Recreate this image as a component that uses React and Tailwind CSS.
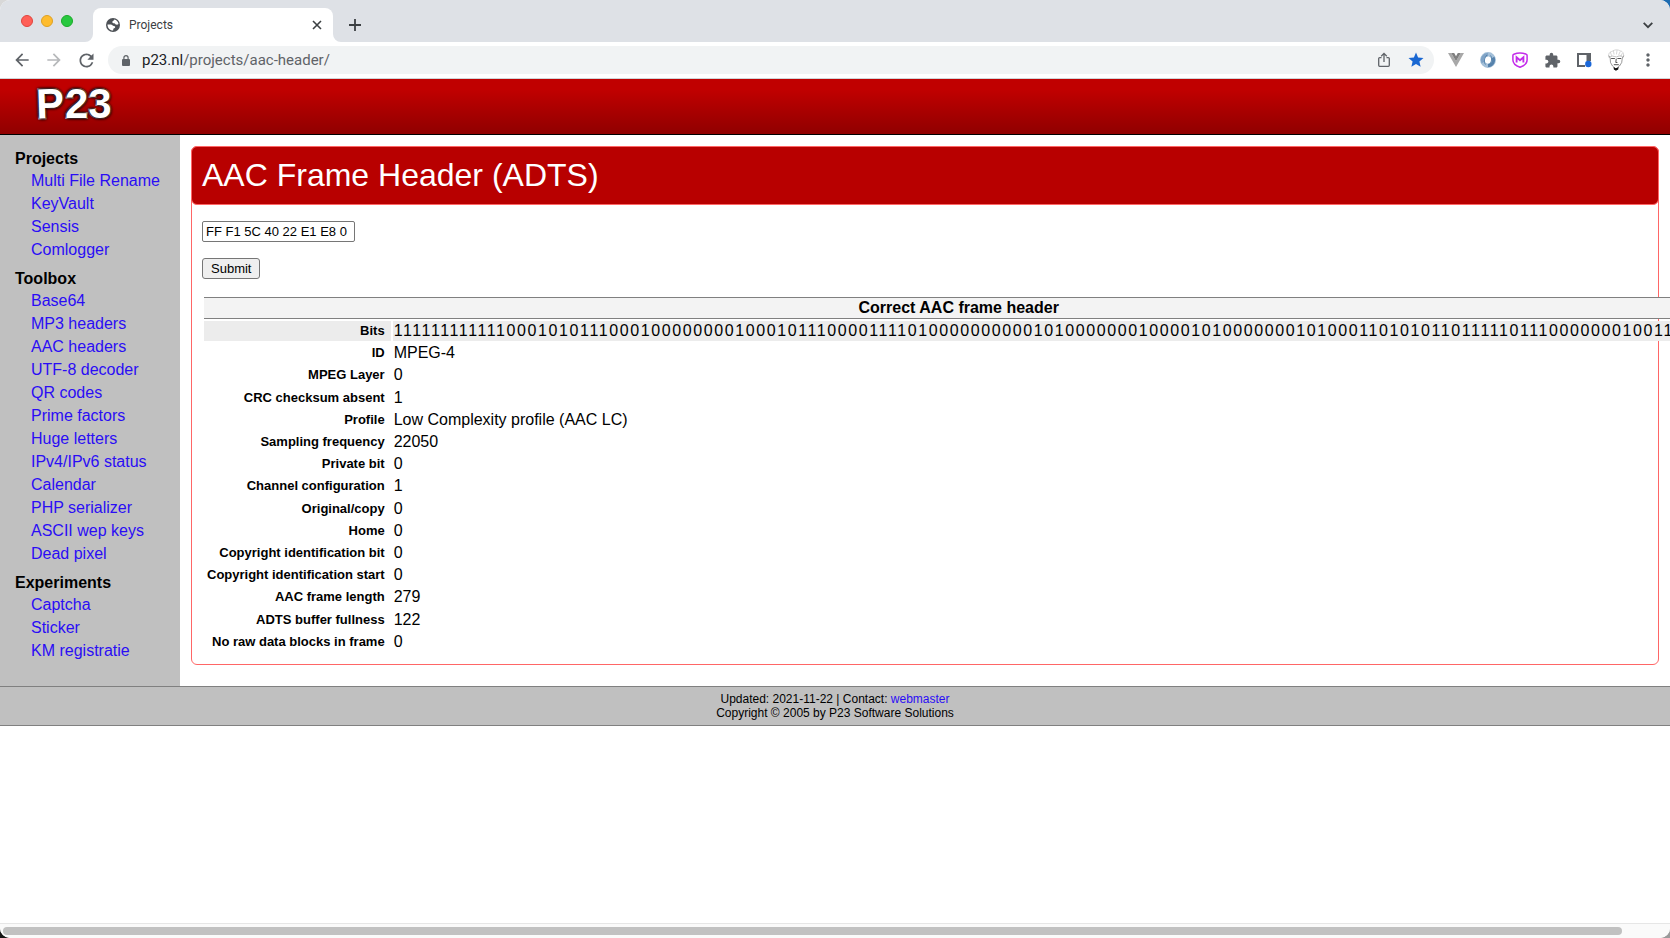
import React from "react";
import { MdArrowBack, MdArrowForward, MdRefresh, MdStar, MdExtension, MdMoreVert } from "react-icons/md";

const menu = [
  { title: "Projects", items: ["Multi File Rename", "KeyVault", "Sensis", "Comlogger"] },
  {
    title: "Toolbox",
    items: [
      "Base64",
      "MP3 headers",
      "AAC headers",
      "UTF-8 decoder",
      "QR codes",
      "Prime factors",
      "Huge letters",
      "IPv4/IPv6 status",
      "Calendar",
      "PHP serializer",
      "ASCII wep keys",
      "Dead pixel",
    ],
  },
  { title: "Experiments", items: ["Captcha", "Sticker", "KM registratie"] },
];

const bits = [
  "11111111", "11110001", "01011100", "01000000", "00100010", "11100001", "11101000", "00000001",
  "01000000", "01000010", "10000000", "10100011", "01010110", "11111011", "10000000", "10011000",
].join("");

const fields = [
  ["ID", "MPEG-4"],
  ["MPEG Layer", "0"],
  ["CRC checksum absent", "1"],
  ["Profile", "Low Complexity profile (AAC LC)"],
  ["Sampling frequency", "22050"],
  ["Private bit", "0"],
  ["Channel configuration", "1"],
  ["Original/copy", "0"],
  ["Home", "0"],
  ["Copyright identification bit", "0"],
  ["Copyright identification start", "0"],
  ["AAC frame length", "279"],
  ["ADTS buffer fullness", "122"],
  ["No raw data blocks in frame", "0"],
];

function Slot({ label, children, className = "" }) {
  return (
    <button type="button" aria-label={label} className={`flex h-7 w-8 shrink-0 items-center justify-center text-[#5f6368] ${className}`}>
      {children}
    </button>
  );
}

function TabStrip() {
  return (
    <div className="flex h-[42px] shrink-0 items-end bg-[#dee1e6] pr-[6px]">
      <div className="flex h-[42px] w-[93px] items-center gap-2 pl-[21px]">
        <button type="button" aria-label="Close window" className="size-3 rounded-full border border-[#e0443e] bg-[#ff5f57]" />
        <button type="button" aria-label="Minimize window" className="size-3 rounded-full border border-[#dea123] bg-[#febc2e]" />
        <button type="button" aria-label="Zoom window" className="size-3 rounded-full border border-[#1aab29] bg-[#28c840]" />
      </div>
      <div className="relative flex h-[34px] w-[240px] items-center rounded-t-lg bg-white pl-[13px] pr-[8px]">
        <svg className="absolute -left-2 bottom-0 size-2 text-white" viewBox="0 0 8 8" aria-hidden="true">
          <path d="M8 0v8H0a8 8 0 0 0 8-8z" fill="currentColor" />
        </svg>
        <svg className="absolute -right-2 bottom-0 size-2 text-white" viewBox="0 0 8 8" aria-hidden="true">
          <path d="M0 0v8h8a8 8 0 0 1-8-8z" fill="currentColor" />
        </svg>
        <svg className="size-[14px]" viewBox="0 0 14 14" aria-hidden="true">
          <circle cx="7" cy="7" r="7" fill="#4d5156" />
          <path d="M1.5 6.400h3.200c1.600 0 1.800 1.500 3.200 1.500 1.200 0 1.500.8 1.200 1.500-.4.900-1.500.7-1.800 1.500-.2.600.2 1.200-.3 1.700C3.800 12.300 1.500 9.800 1.500 6.400z" fill="#fff" />
          <path d="M8.300 1.600c2.200.5 3.800 2.200 4.200 4.400-.7.700-1.600.9-2.600.6-.9-.3-.6-1.200-1.700-1.300-1.300-.1-2-.6-1.800-1.600.2-.9 1.700-1 1.900-2.100z" fill="#fff" />
        </svg>
        <span className="ml-[9px] flex-1 font-[Roboto,sans-serif] text-[12px] leading-4 text-[#3c4043]">Projects</span>
        <button type="button" aria-label="Close tab" className="flex size-4 items-center justify-center text-[#3c4043]">
          <svg className="size-[10px]" viewBox="0 0 10 10" fill="none" stroke="currentColor" strokeWidth="1.600" aria-hidden="true">
            <path d="M1 1l8 8M9 1L1 9" />
          </svg>
        </button>
      </div>
      <button type="button" aria-label="New tab" className="ml-2 flex h-[34px] w-7 items-center justify-center text-[#3c4043]">
        <svg className="size-3" viewBox="0 0 12 12" fill="none" stroke="currentColor" strokeWidth="1.800" aria-hidden="true">
          <path d="M6 0v12M0 6h12" />
        </svg>
      </button>
      <button type="button" aria-label="Search tabs" className="ml-auto flex h-[34px] w-8 items-center justify-center text-[#3c4043]">
        <svg className="size-[10px]" viewBox="0 0 10 10" fill="none" stroke="currentColor" strokeWidth="1.800" aria-hidden="true">
          <path d="M.7 2.800L5 7.200l4.300-4.400" />
        </svg>
      </button>
    </div>
  );
}

function Toolbar() {
  return (
    <div className="flex h-[37px] shrink-0 items-center border-b border-[#d0d3d7] bg-white px-[6px]">
      <Slot label="Back"><MdArrowBack className="size-5" /></Slot>
      <Slot label="Forward" className="opacity-45"><MdArrowForward className="size-5" /></Slot>
      <Slot label="Reload"><MdRefresh className="size-[21px]" /></Slot>
      <div className="mx-[6px] flex h-7 min-w-0 flex-1 items-center rounded-full bg-[#f1f3f4] pl-[14px] pr-[2px]">
        <svg className="h-[11px] w-2 shrink-0" viewBox="0 0 8 11" aria-hidden="true">
          <rect y="4" width="8" height="7" rx="1" fill="#5f6368" />
          <path d="M1.900 5V2.700a2.100 2.100 0 0 1 4.200 0V5" fill="none" stroke="#5f6368" strokeWidth="1.200" />
        </svg>
        <a href="#address" className="ml-3 min-w-0 flex-1 font-[Roboto,sans-serif] text-[15px] leading-5 text-[#5f6368]">
          <span className="text-[#202124]">p23.nl</span>/projects/aac-header/
        </a>
        <Slot label="Share">
          <svg className="h-4 w-3" viewBox="0 0 12 16" fill="none" stroke="currentColor" strokeWidth="1.300" aria-hidden="true">
            <path d="M3.500 5.600H1.700a1 1 0 0 0-1 1v6.700a1 1 0 0 0 1 1h8.600a1 1 0 0 0 1-1V6.600a1 1 0 0 0-1-1H8.500M6 10V1.500M3.200 4.200L6 1.400l2.800 2.800" />
          </svg>
        </Slot>
        <Slot label="Bookmark"><MdStar className="size-[18px] text-[#1967d2]" /></Slot>
      </div>
      <Slot label="Vue devtools">
        <svg className="h-[14px] w-4" viewBox="0 0 16 14" aria-hidden="true">
          <path d="M0 0h3.200L8 8.300 12.800 0H16L8 14z" fill="#a8a8a8" />
          <path d="M3.200 0h3L8 3.200 9.800 0h3L8 8.300z" fill="#7f7f7f" />
        </svg>
      </Slot>
      <Slot label="JSON viewer">
        <svg className="size-4" viewBox="0 0 16 16" fill="none" aria-hidden="true">
          <circle cx="8" cy="8" r="5.600" stroke="#a3bfd8" strokeWidth="4.600" />
          <path d="M8 13.600A5.600 5.600 0 0 0 13 5.500" stroke="#5682ac" strokeWidth="3" />
          <path d="M8 2.400A5.600 5.600 0 0 0 3 10.500" stroke="#7fa3c6" strokeWidth="3" />
          <path d="M10.500 3.500c2 2.500 1.200 6.800-1.500 9.500M5.500 12.500c-2-2.500-1.200-6.800 1.500-9.500" stroke="#4c7aa6" strokeWidth=".9" />
          <ellipse cx="8" cy="8" rx="2.200" ry="3.600" transform="rotate(12 8 8)" fill="#fff" />
        </svg>
      </Slot>
      <Slot label="Shield">
        <svg className="size-4" viewBox="0 0 16 16" fill="none" stroke="#c32bea" aria-hidden="true">
          <path d="M1.800 2.200Q8-.2 14.200 2.200q.9.300.9 1.300V8c0 3.600-3.300 5.900-7.100 7.300C4.200 13.900.9 11.600.9 8V3.500q0-1 .9-1.300z" strokeWidth="1.500" />
          <path d="M4.600 10.400V5.300L8 8.300l3.400-3v5.100" strokeWidth="1.900" />
        </svg>
      </Slot>
      <Slot label="Extensions"><MdExtension className="size-[17px]" /></Slot>
      <Slot label="Side panel">
        <svg className="size-4" viewBox="0 0 16 16" aria-hidden="true">
          <path d="M1 1h14v8h-4.500V3H3v10h6v2H1z" fill="#5f6368" />
          <circle cx="12.300" cy="12" r="3.200" fill="#1a67d8" />
        </svg>
      </Slot>
      <Slot label="Profile">
        <svg className="h-[22px] w-[18px]" viewBox="0 0 18 22" fill="none" stroke="#555" strokeWidth=".6" strokeLinecap="round" aria-hidden="true">
          <path d="M2 8.500C.8 5 2.500 2.800 5 2.500 7.500.3 11.500.5 13.500 2c2.500.3 3.800 3 2.800 6.300M3.500 3.500l1 3M6.500 2.200l.5 3M10 1.500L9.500 5M13 2.800l-1.200 3M15.200 4.500L14 7" stroke="#bbb" />
          <path d="M2 7l1.200 2 .3 4.500L5.500 17l3 2.500M16.500 7l-1.200 2-.6 4.500L12.500 17l-3 3" />
          <path d="M3.500 7.500q2-1 4 0t3.500-.2q2-1 4 0" stroke="#999" />
          <path d="M4.500 9.500h3M10.800 9.500h3M9.200 10l-.4 3.500h1.200M7.200 15.700h4.200" strokeWidth="1" />
          <path d="M6.500 18l2.200 1.200 2-.7 1-1.300-.5 3.300-2.300 1.200-2-1.200z" fill="#111" stroke="none" />
        </svg>
      </Slot>
      <Slot label="Menu"><MdMoreVert className="size-5" /></Slot>
    </div>
  );
}

function Banner() {
  return (
    <header className="flex h-14 items-start border-b border-black bg-linear-to-b from-[#c00000] from-20% to-[#900000] pl-9">
      <a
        href="#home"
        className="flex text-[42px] font-bold leading-[50px] text-white [-webkit-text-stroke:2px_white] [paint-order:stroke_fill] [text-shadow:0_0_3px_#200000,0_0_3px_#200000,1px_1px_3px_#200000,-1px_-1px_3px_#200000]"
      >
        <span className="-rotate-2 pr-px">P</span>
        <span>23</span>
      </a>
    </header>
  );
}

function Sidebar() {
  return (
    <nav className="w-[180px] shrink-0 bg-[#c0c0c0] pb-6 pl-[15px] pt-[6px]">
      {menu.map((group) => (
        <section key={group.title} className="pt-2">
          <h2 className="font-bold leading-5">{group.title}</h2>
          <ul className="pl-4">
            {group.items.map((item) => (
              <li key={item} className="leading-[23px]">
                <a href="#page" className="text-[#2a0df5]">{item}</a>
              </li>
            ))}
          </ul>
        </section>
      ))}
    </nav>
  );
}

function Content() {
  return (
    <main className="min-w-0 flex-1 px-[11px] pb-[21px] pt-[11px]">
      <div className="h-full rounded-md border border-[#ff6666]">
        <h1 className="-mx-px -mt-px rounded-md border border-[#ff6666] bg-[#b80000] px-[10px] text-[32px] leading-[57px] text-white">
          AAC Frame Header (ADTS)
        </h1>
        <form className="flex flex-col items-start gap-4 px-[10px] pt-4" onSubmit={(e) => e.preventDefault()}>
          <input
            aria-label="Frame header"
            defaultValue="FF F1 5C 40 22 E1 E8 0"
            className="h-[21px] w-[153px] rounded-[2px] border border-[#767676] bg-white px-[3px] text-[13px]"
          />
          <button type="submit" className="h-[21px] rounded-[3px] border border-[#767676] bg-[#efefef] px-2 text-[13px] leading-[18px]">
            Submit
          </button>
        </form>
        <table className="ml-3 mt-4 h-[359px] border-separate border-spacing-x-0 border-spacing-y-[2px] whitespace-nowrap">
          <thead>
            <tr>
              <th colSpan={2} className="h-[22px] border-y border-[#808080] bg-[#f3f3f3] p-0 leading-5">
                Correct AAC frame header
              </th>
            </tr>
          </thead>
          <tbody>
            <tr>
              <th scope="row" className="border-r-2 border-white bg-[#ececec] p-0 pr-[6px] text-right text-[13px] leading-5">Bits</th>
              <td className="bg-[#ececec] p-0 pl-px pr-2 leading-5 tracking-widest">{bits}</td>
            </tr>
            {fields.map(([name, value]) => (
              <tr key={name}>
                <th scope="row" className="border-r-2 border-white p-0 pl-[3px] pr-[6px] text-right text-[13px] leading-5">{name}</th>
                <td className="p-0 pl-px leading-5">{value}</td>
              </tr>
            ))}
          </tbody>
        </table>
      </div>
    </main>
  );
}

export default function App() {
  return (
    <div className="h-screen bg-[conic-gradient(#1d6bb0_0_25%,#9a9a9a_25%_50%,#151515_50%_75%,#d8d8d8_75%)]">
      <div className="flex h-full flex-col overflow-hidden rounded-[10px] bg-white font-['Liberation_Sans',Arial,sans-serif] text-[16px] text-black">
        <TabStrip />
        <Toolbar />
        <div className="min-h-0 flex-1 overflow-hidden">
          <Banner />
          <div className="flex">
            <Sidebar />
            <Content />
          </div>
          <footer className="border-y border-[#808080] bg-[#c0c0c0] py-[5px] text-center text-[12px] leading-[14px]">
            <p>
              Updated: 2021-11-22 | Contact: <a href="#webmaster" className="text-[#2a0df5]">webmaster</a>
            </p>
            <p>Copyright © 2005 by P23 Software Solutions</p>
          </footer>
        </div>
        <div className="h-[15px] shrink-0 border-t border-[#e6e6e6] bg-[#fafafa] px-[3px] pt-[3px]">
          <div className="h-2 w-[97.300%] rounded-full bg-[#c1c1c1]" />
        </div>
      </div>
    </div>
  );
}
